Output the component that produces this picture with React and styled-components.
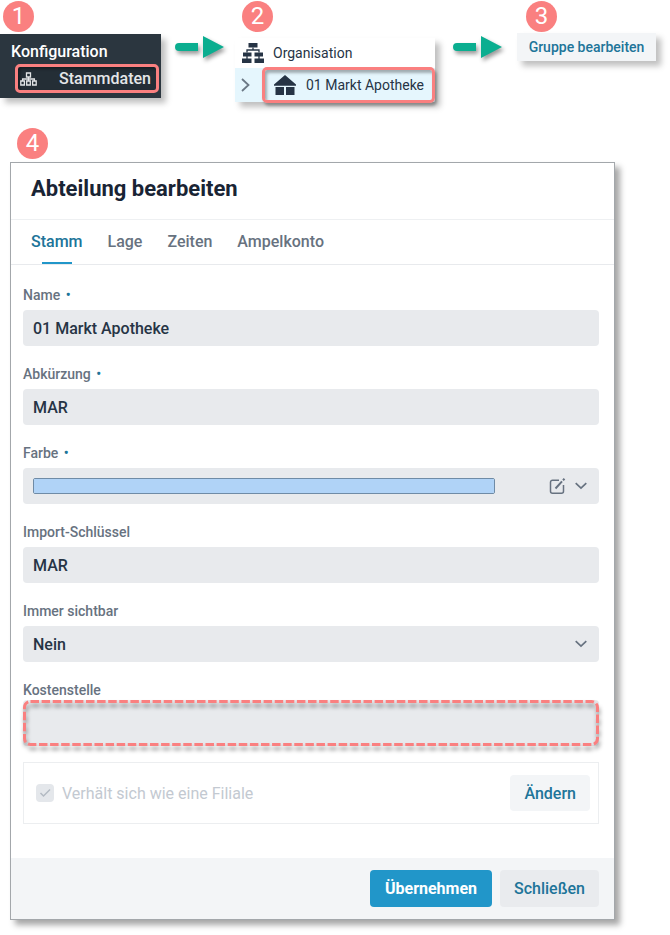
import { useState } from 'react';
import styled, { createGlobalStyle } from 'styled-components';

const GlobalStyle = createGlobalStyle`
	* {
		box-sizing: border-box;
	}

	body {
		margin: 0;
		background: #fff;
		font-family: Roboto, 'Liberation Sans', sans-serif;
		color: #263445;
	}

	button,
	input,
	select {
		margin: 0;
		font-family: inherit;
	}
`;

const Page = styled.main`
	padding: 1px 0 14px;
`;

const Steps = styled.div`
	display: flex;
	align-items: flex-start;
`;

const Step = styled.section`
	display: flex;
	flex-direction: column;
	flex: none;
	gap: ${({ $gap = 2 }) => $gap}px;
`;

const Badge = styled.span`
	display: flex;
	align-items: center;
	justify-content: center;
	width: 31px;
	height: 31px;
	margin-left: ${({ $left = 7 }) => $left}px;
	border-radius: 50%;
	background: #fa8080;
	color: #fff;
	font-size: 24px;
	line-height: 31px;
`;

const Connector = styled.div`
	display: flex;
	justify-content: center;
	width: ${({ $width }) => $width}px;
	padding: 34px 0 0 4px;
`;

const ArrowSvg = styled.svg`
	filter: drop-shadow(2px 3px 2px rgba(0, 0, 0, 0.4));
`;

const DarkMenu = styled.nav`
	width: 161px;
	height: 64px;
	padding: 5px 2px 0 11px;
	background: #2b363f;
	box-shadow: 5px 5px 6px rgba(0, 0, 0, 0.25);
	color: #fff;
	font-size: 16px;
	font-weight: 500;
	line-height: 25px;
`;

const MenuLink = styled.a`
	display: flex;
	align-items: center;
	justify-content: space-between;
	height: 29px;
	margin-left: 4px;
	padding: 0 5px 0 2px;
	border: 3px solid #fa8080;
	border-radius: 5px;
	background: #242e36;
	box-shadow: inset 2px 2px 3px rgba(0, 0, 0, 0.4);
	color: #e4e6e8;
	text-decoration: none;
`;

const Tree = styled.nav`
	width: 200px;
	box-shadow: 5px 5px 6px rgba(0, 0, 0, 0.25);
	background: #fff;
	font-size: 14px;
`;

const TreeRow = styled.div`
	display: flex;
	align-items: center;
	gap: 9px;
	height: 30px;
	padding-left: 7px;
`;

const TreeChild = styled.div`
	display: flex;
	align-items: center;
	height: 34px;
	background: #e5f6fd;
`;

const TreeToggle = styled.button`
	display: flex;
	justify-content: center;
	width: 27px;
	padding: 0 6px 0 0;
	border: 0;
	background: none;
	color: #6b7885;
`;

const TreeLink = styled.a`
	display: flex;
	flex: 1;
	align-items: center;
	gap: 10px;
	height: 36px;
	padding: 0 0 0 9px;
	border: 3px solid #fa8080;
	border-radius: 5px;
	box-shadow: 2px 3px 3px rgba(0, 0, 0, 0.3), inset 2px 3px 3px rgba(0, 0, 0, 0.3);
	color: inherit;
	text-decoration: none;
	white-space: nowrap;
`;

const GroupButton = styled.button`
	width: 139px;
	height: 28px;
	padding: 0;
	border: 0;
	background: #f3f5f7;
	box-shadow: 5px 5px 6px rgba(0, 0, 0, 0.25);
	color: #207499;
	font-size: 14px;
	font-weight: 500;
`;

const DialogStep = styled.section`
	margin: 26px 55px 0 10px;
`;

const Dialog = styled.form`
	margin-top: 3px;
	border: 1px solid #a3a7ab;
	background: #fff;
	box-shadow: 5px 5px 6px rgba(0, 0, 0, 0.35);
`;

const Title = styled.h1`
	margin: 0;
	padding: 10px 20px 0;
	height: 57px;
	border-bottom: 1px solid #eef0f2;
	color: #192434;
	font-size: 22px;
	font-weight: 700;
	line-height: 32px;
`;

const Tabs = styled.div`
	display: flex;
	gap: 25px;
	height: 45px;
	padding: 0 20px;
	border-bottom: 1px solid #e8eaed;
`;

const Tab = styled.button`
	display: flex;
	flex-direction: column;
	align-items: center;
	justify-content: space-between;
	padding: 12px 0 0;
	border: 0;
	background: none;
	color: ${({ $active }) => ($active ? '#207499' : '#677280')};
	font-size: 16px;
	font-weight: 500;
	line-height: 20px;

	&::after {
		content: '';
		width: 30px;
		height: 2px;
		background: ${({ $active }) => ($active ? '#2196c9' : 'transparent')};
	}
`;

const Body = styled.div`
	display: flex;
	flex-direction: column;
	gap: 18px;
	padding: 20px 15px 34px 12px;
`;

const Field = styled.div`
	display: flex;
	flex-direction: column;
	gap: ${({ $gap = 5 }) => $gap}px;
`;

const Label = styled.label`
	color: #677280;
	font-size: 14px;
	font-weight: 500;
	line-height: 20px;
`;

const Required = styled.span`
	margin-left: 2px;
	color: #207499;
`;

const Input = styled.input`
	width: 100%;
	height: 36px;
	padding: 0 10px;
	border: 0;
	border-radius: 4px;
	background: #e8eaed;
	color: #263445;
	font-size: 16px;
	font-weight: 500;
`;

const ColorBox = styled.div`
	display: flex;
	align-items: center;
	height: 36px;
	padding: 0 12px 0 10px;
	border-radius: 4px;
	background: #e8eaed;
`;

const ColorInput = styled.input`
	flex: 1;
	height: 16px;
	margin-right: 54px;
	padding: 0;
	border: 1px solid #6f8ba6;
	border-radius: 2px;
	background: #b0d3f7;
	appearance: none;

	&::-webkit-color-swatch-wrapper {
		padding: 0;
	}

	&::-webkit-color-swatch {
		border: 0;
		border-radius: 0;
	}
`;

const IconButton = styled.button`
	display: flex;
	margin-left: ${({ $left = 0 }) => $left}px;
	padding: 0;
	border: 0;
	background: none;
	color: #677280;
`;

const SelectBox = styled.div`
	display: grid;
	align-items: center;
	color: #677280;

	& > * {
		grid-area: 1 / 1;
	}

	svg {
		justify-self: end;
		margin-right: 12px;
		pointer-events: none;
	}
`;

const Select = styled(Input)`
	appearance: none;
`;

const MarkedBox = styled.div`
	display: grid;

	& > * {
		grid-area: 1 / 1;
	}

	input {
		height: 46px;
	}
`;

const DashedSvg = styled.svg`
	width: 100%;
	height: 46px;
	overflow: visible;
	pointer-events: none;
	filter: drop-shadow(1px 4px 2px rgba(0, 0, 0, 0.4));

	rect {
		width: calc(100% - 3px);
		height: calc(100% - 3px);
	}
`;

const Branch = styled.div`
	display: flex;
	align-items: center;
	justify-content: space-between;
	height: 62px;
	margin-top: -2px;
	padding: 0 8px 0 12px;
	border: 1px solid #eceef0;
`;

const CheckLabel = styled.label`
	display: flex;
	align-items: center;
	gap: 8px;
	color: #c3c9d1;
	font-size: 16px;
`;

const CheckBox = styled.span`
	display: grid;

	& > * {
		grid-area: 1 / 1;
	}

	input {
		width: 18px;
		height: 18px;
		border-radius: 4px;
		background: #e4e7eb;
		appearance: none;
	}

	svg {
		pointer-events: none;
	}
`;

const Footer = styled.footer`
	display: flex;
	justify-content: flex-end;
	gap: 8px;
	padding: 12px 15px;
	background: #f3f5f7;
`;

const variants = {
	primary: { background: '#2196c9', color: '#fff', weight: 700 },
	secondary: { background: '#e9ebee', color: '#207499', weight: 500 },
	light: { background: '#f3f5f7', color: '#207499', weight: 500 },
};

const Button = styled.button`
	height: ${({ $variant }) => ($variant === 'light' ? 36 : 37)}px;
	padding: 0 ${({ $variant }) => ($variant === 'primary' ? 15 : 14)}px;
	border: 0;
	border-radius: 4px;
	background: ${({ $variant }) => variants[$variant].background};
	color: ${({ $variant }) => variants[$variant].color};
	font-size: 16px;
	font-weight: ${({ $variant }) => variants[$variant].weight};
`;

const Arrow = () => (
	<ArrowSvg width="50" height="24" viewBox="0 0 50 24" fill="#0bae90" aria-hidden="true">
		<path d="M4 8h19v8H4a4 4 0 0 1 0-8zM28 1l21 11-21 11z" />
	</ArrowSvg>
);

const Chevron = () => (
	<svg width="12" height="8" viewBox="0 0 12 8" fill="none" stroke="currentColor" strokeWidth="1.7">
		<path d="M.7 1.2 6 6.2l5.3-5" />
	</svg>
);

const SmallSitemap = () => (
	<svg width="17" height="14" viewBox="0 0 17 14" fill="none" stroke="currentColor" strokeWidth="1.3">
		<path d="M6.5 1h4v4h-4zM.8 9h3.6v4H.8zM6.7 9h3.6v4H6.7zM12.6 9h3.6v4h-3.6zM8.5 5v4M2.6 9V7h11.8v2" />
	</svg>
);

const Sitemap = () => (
	<svg width="22" height="20" viewBox="0 0 22 20" fill="#263445">
		<path d="M6.500 0h9v4.500h-9zM1 9.500h8.500v4H1zM12.500 9.500H21v4h-8.500zM0 15.500h9.500V20H0zM12.500 15.500H22V20h-9.500z" />
		<path d="M11 4.500v2.500M5 9.500V7h12v2.500M5 13v3M17 13v3" fill="none" stroke="#263445" strokeWidth="1.3" />
	</svg>
);

const House = () => (
	<svg width="22" height="20" viewBox="0 0 22 20" fill="#263445">
		<path d="M11 0l11 9.500v1.200H0V9.500zM1.500 12h8.500v8H1.500zM12 12h8.500v8H12z" />
	</svg>
);

const Edit = () => (
	<svg width="17" height="17" viewBox="0 0 17 17" fill="none" stroke="currentColor" strokeWidth="1.5">
		<path d="M10 2.200H3.500A2 2 0 0 0 1.500 4.200v9a2 2 0 0 0 2 2h9a2 2 0 0 0 2-2V7" />
		<path d="M6.500 10.500 13 3.400M14 2.300l1.500-1.600" strokeWidth="2" />
	</svg>
);

const TextField = ({ id, label, required, value, onChange }) => (
	<Field>
		<Label htmlFor={id}>
			{label} {required && <Required>•</Required>}
		</Label>
		<Input id={id} name={id} value={value} onChange={onChange} />
	</Field>
);

const tabs = ['Stamm', 'Lage', 'Zeiten', 'Ampelkonto'];

const App = () => {
	const [activeTab, setActiveTab] = useState('Stamm');
	const [form, setForm] = useState({
		name: '01 Markt Apotheke',
		short: 'MAR',
		color: '#b0d3f7',
		importKey: 'MAR',
		visible: 'Nein',
		costCenter: '',
	});

	const onChange = ({ target }) => setForm({ ...form, [target.name]: target.value });

	return (
		<Page>
			<GlobalStyle />
			<Steps>
				<Step>
					<Badge $left={3}>1</Badge>
					<DarkMenu>
						<div>Konfiguration</div>
						<MenuLink href="#stammdaten">
							<SmallSitemap />
							Stammdaten
						</MenuLink>
					</DarkMenu>
				</Step>
				<Connector $width={74}>
					<Arrow />
				</Connector>
				<Step $gap={6}>
					<Badge>2</Badge>
					<Tree>
						<TreeRow>
							<Sitemap />
							Organisation
						</TreeRow>
						<TreeChild>
							<TreeToggle type="button" aria-label="Aufklappen">
								<svg width="9" height="14" viewBox="0 0 9 14" fill="none" stroke="currentColor" strokeWidth="1.8">
									<path d="M1 1l6.500 6L1 13" />
								</svg>
							</TreeToggle>
							<TreeLink href="#markt-apotheke">
								<House />
								01 Markt Apotheke
							</TreeLink>
						</TreeChild>
					</Tree>
				</Step>
				<Connector $width={82}>
					<Arrow />
				</Connector>
				<Step $gap={1}>
					<Badge $left={9}>3</Badge>
					<GroupButton type="button">Gruppe bearbeiten</GroupButton>
				</Step>
			</Steps>

			<DialogStep>
				<Badge>4</Badge>
				<Dialog onSubmit={(event) => event.preventDefault()}>
					<Title>Abteilung bearbeiten</Title>
					<Tabs role="tablist">
						{tabs.map((tab) => (
							<Tab
								key={tab}
								type="button"
								role="tab"
								aria-selected={tab === activeTab}
								$active={tab === activeTab}
								onClick={() => setActiveTab(tab)}
							>
								{tab}
							</Tab>
						))}
					</Tabs>
					<Body>
						<TextField id="name" label="Name" required value={form.name} onChange={onChange} />
						<TextField id="short" label="Abkürzung" required value={form.short} onChange={onChange} />
						<Field>
							<Label htmlFor="color">
								Farbe <Required>•</Required>
							</Label>
							<ColorBox>
								<ColorInput id="color" name="color" type="color" value={form.color} onChange={onChange} />
								<IconButton type="button" aria-label="Farbe bearbeiten">
									<Edit />
								</IconButton>
								<IconButton type="button" aria-label="Farbe wählen" $left={9}>
									<Chevron />
								</IconButton>
							</ColorBox>
						</Field>
						<TextField id="importKey" label="Import-Schlüssel" value={form.importKey} onChange={onChange} />
						<Field>
							<Label htmlFor="visible">Immer sichtbar</Label>
							<SelectBox>
								<Select as="select" id="visible" name="visible" value={form.visible} onChange={onChange}>
									<option>Nein</option>
									<option>Ja</option>
								</Select>
								<Chevron />
							</SelectBox>
						</Field>
						<Field $gap={0}>
							<Label htmlFor="costCenter">Kostenstelle</Label>
							<MarkedBox>
								<Input id="costCenter" name="costCenter" value={form.costCenter} onChange={onChange} />
								<DashedSvg aria-hidden="true">
									<rect x="1.5" y="1.5" rx="6" fill="none" stroke="#fa8080" strokeWidth="3" strokeDasharray="8.500 2.600" />
								</DashedSvg>
							</MarkedBox>
						</Field>
						<Branch>
							<CheckLabel>
								<CheckBox>
									<input type="checkbox" defaultChecked disabled />
									<svg width="18" height="18" viewBox="0 0 18 18" fill="none" stroke="#b3bac3" strokeWidth="1.5">
										<path d="M4.500 9l3 3 6.500-6.500" />
									</svg>
								</CheckBox>
								Verhält sich wie eine Filiale
							</CheckLabel>
							<Button type="button" $variant="light">
								Ändern
							</Button>
						</Branch>
					</Body>
					<Footer>
						<Button type="submit" $variant="primary">
							Übernehmen
						</Button>
						<Button type="button" $variant="secondary">
							Schließen
						</Button>
					</Footer>
				</Dialog>
			</DialogStep>
		</Page>
	);
};

export default App;
